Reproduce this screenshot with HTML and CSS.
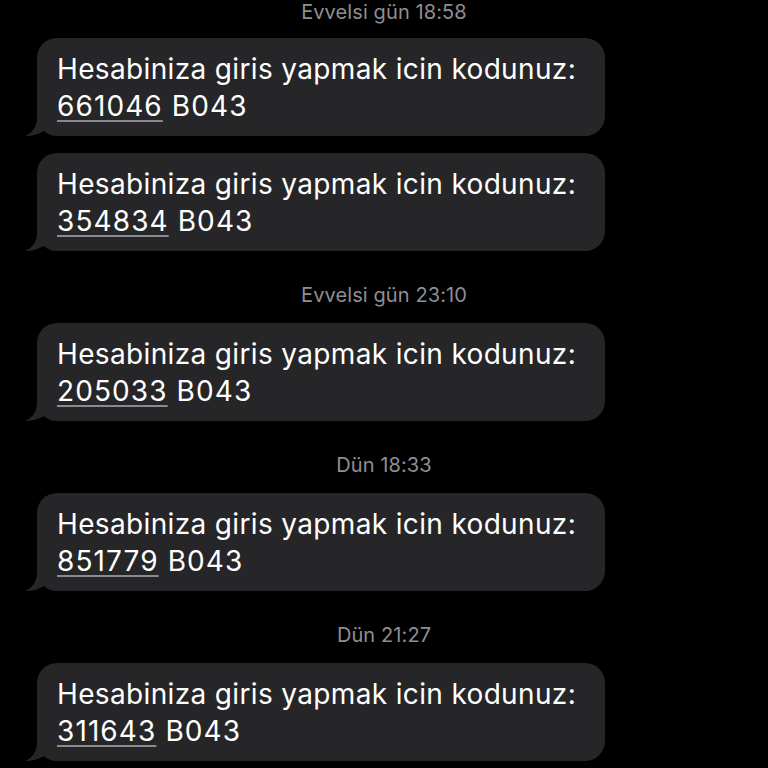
FILE: index.html
```html
<!DOCTYPE html>
<html lang="tr">
<head>
<meta charset="utf-8">
<title>Mesajlar</title>
<link rel="stylesheet" href="styles.css">
</head>
<body>
<main class="thread">
  <div class="stamp first">Evvelsi gün 18:58</div>
  <div class="bubble">
    <p class="msg">Hesabiniza giris yapmak icin kodunuz:<br><span class="line2"><span class="code">661046</span> B043</span></p>
    <svg class="tail" viewBox="0 0 30 30" width="30" height="30"><path d="M12 0 L12 12 C12 21 7 27 0 30 C7 30 14 28 19 25 L26 25 L26 0 Z"/></svg>
  </div>
  <div class="bubble next">
    <p class="msg">Hesabiniza giris yapmak icin kodunuz:<br><span class="line2"><span class="code">354834</span> B043</span></p>
    <svg class="tail" viewBox="0 0 30 30" width="30" height="30"><path d="M12 0 L12 12 C12 21 7 27 0 30 C7 30 14 28 19 25 L26 25 L26 0 Z"/></svg>
  </div>
  <div class="stamp later">Evvelsi gün 23:10</div>
  <div class="bubble">
    <p class="msg">Hesabiniza giris yapmak icin kodunuz:<br><span class="line2"><span class="code">205033</span> B043</span></p>
    <svg class="tail" viewBox="0 0 30 30" width="30" height="30"><path d="M12 0 L12 12 C12 21 7 27 0 30 C7 30 14 28 19 25 L26 25 L26 0 Z"/></svg>
  </div>
  <div class="stamp later">Dün 18:33</div>
  <div class="bubble">
    <p class="msg">Hesabiniza giris yapmak icin kodunuz:<br><span class="line2"><span class="code">851779</span> B043</span></p>
    <svg class="tail" viewBox="0 0 30 30" width="30" height="30"><path d="M12 0 L12 12 C12 21 7 27 0 30 C7 30 14 28 19 25 L26 25 L26 0 Z"/></svg>
  </div>
  <div class="stamp later">Dün 21:27</div>
  <div class="bubble">
    <p class="msg">Hesabiniza giris yapmak icin kodunuz:<br><span class="line2"><span class="code">311643</span> B043</span></p>
    <svg class="tail" viewBox="0 0 30 30" width="30" height="30"><path d="M12 0 L12 12 C12 21 7 27 0 30 C7 30 14 28 19 25 L26 25 L26 0 Z"/></svg>
  </div>
</main>
</body>
</html>
```

FILE: styles.css
```css
html, body {
  margin: 0;
  padding: 0;
  background: #000;
}
body {
  width: 768px;
  height: 768px;
  overflow: hidden;
  font-family: Inter, "Liberation Sans", sans-serif;
}
.thread {
  display: flex;
  flex-direction: column;
  align-items: flex-start;
}
.stamp {
  align-self: stretch;
  text-align: center;
  color: #8e8e93;
  font-size: 20px;
  letter-spacing: 0.1px;
  line-height: 20px;
  height: 20px;
  margin-bottom: 18px;
}
.stamp.first {
  line-height: 24px;
  overflow: visible;
}
.stamp.later {
  margin-top: 34px;
}
.bubble {
  position: relative;
  margin-left: 37px;
  width: 568px;
  box-sizing: border-box;
  background: #262628;
  border-radius: 20px;
  padding: 13px 20px 11px 20px;
}
.bubble.next {
  margin-top: 17px;
}
.msg {
  margin: 0;
  color: #fff;
  font-size: 28px;
  letter-spacing: 0.35px;
  line-height: 37px;
  white-space: nowrap;
}
.line2 {
  letter-spacing: 1.1px;
}
.code {
  text-decoration: underline;
  text-decoration-color: #8a8a8e;
  text-decoration-thickness: 1.5px;
  text-underline-offset: 4px;
}
.tail {
  position: absolute;
  left: -12px;
  bottom: 0;
  display: block;
}
.tail path {
  fill: #262628;
}
```
